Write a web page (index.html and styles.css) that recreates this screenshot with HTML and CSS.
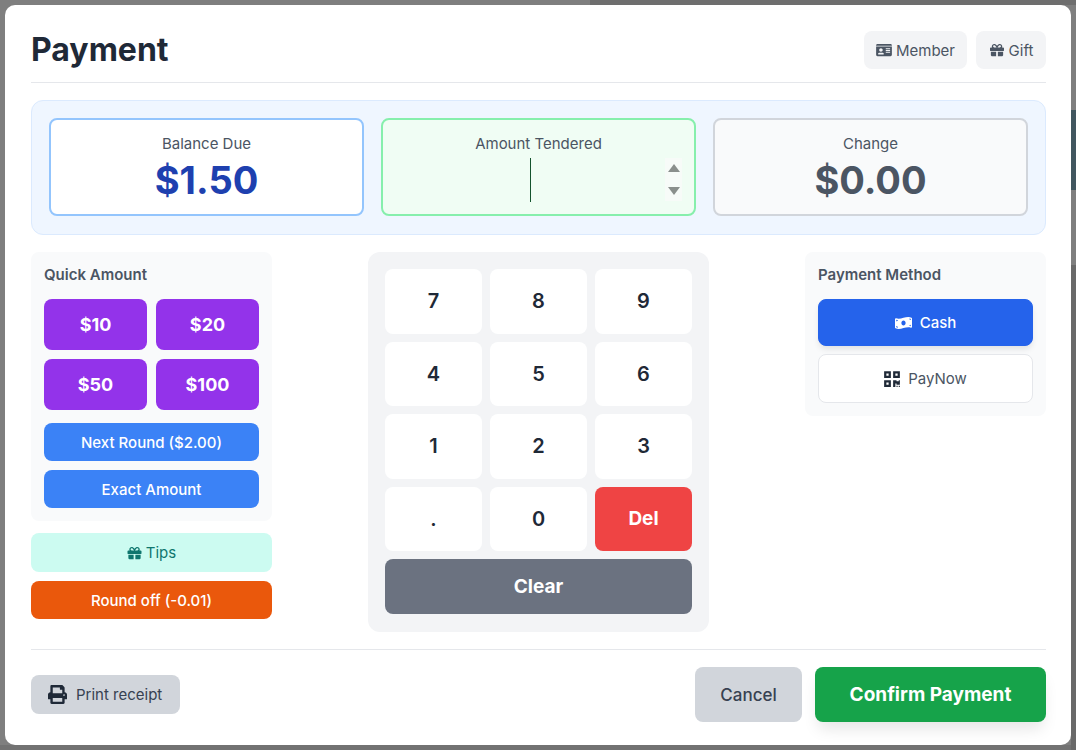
FILE: index.html
```html
<!DOCTYPE html>
<html lang="en">
<head>
    <meta charset="UTF-8">
    <meta name="viewport" content="width=device-width, initial-scale=1.0">
    <title>Payment</title>
    <link rel="stylesheet" href="styles.css">
</head>
<body>
    <div class="behind-top"></div>
    <div class="behind-bottom"></div>
    <div class="behind-teal"></div>
    <div class="behind-right"></div>
    <div class="modal">
        <header class="modal-head">
            <h1>Payment</h1>
            <div class="head-actions">
                <button class="chip">
                    <svg class="icon" viewBox="0 0 576 512"><path d="M528 32H48C21.5 32 0 53.5 0 80v16h576V80c0-26.5-21.5-48-48-48zM0 432c0 26.5 21.5 48 48 48h480c26.5 0 48-21.5 48-48V128H0v304zm352-232c0-4.4 3.6-8 8-8h144c4.4 0 8 3.6 8 8v16c0 4.4-3.6 8-8 8H360c-4.4 0-8-3.6-8-8v-16zm0 64c0-4.4 3.6-8 8-8h144c4.4 0 8 3.6 8 8v16c0 4.4-3.6 8-8 8H360c-4.4 0-8-3.6-8-8v-16zm0 64c0-4.4 3.6-8 8-8h144c4.4 0 8 3.6 8 8v16c0 4.4-3.6 8-8 8H360c-4.4 0-8-3.6-8-8v-16zM176 192c35.3 0 64 28.7 64 64s-28.7 64-64 64-64-28.7-64-64 28.7-64 64-64zM67.1 396.2C75.5 370.5 99.6 352 128 352h8.2c12.3 5.1 25.7 8 39.8 8s27.6-2.9 39.8-8h8.2c28.4 0 52.5 18.5 60.9 44.2 3.2 9.9-5.2 19.8-15.6 19.8H82.7c-10.4 0-18.8-10-15.6-19.8z"/></svg>
                    Member
                </button>
                <button class="chip chip-gift">
                    <svg class="icon" viewBox="0 0 512 512"><path d="M32 448c0 17.7 14.3 32 32 32h160V320H32v128zm256 32h160c17.7 0 32-14.3 32-32V320H288v160zm192-320h-42.1c6.2-12.1 10.1-25.5 10.1-40 0-48.5-39.5-88-88-88-41.6 0-68.5 21.3-103 68.3-34.5-47-61.4-68.3-103-68.3-48.5 0-88 39.5-88 88 0 14.5 3.8 27.9 10.1 40H32c-17.7 0-32 14.3-32 32v80c0 8.8 7.2 16 16 16h480c8.8 0 16-7.2 16-16v-80c0-17.7-14.3-32-32-32zm-326.1 0c-22.1 0-40-17.9-40-40s17.9-40 40-40c19.9 0 34.6 3.3 86.1 80h-86.1zm206.1 0h-86.1c51.4-76.5 65.7-80 86.1-80 22.1 0 40 17.9 40 40s-17.9 40-40 40z"/></svg>
                    Gift
                </button>
            </div>
        </header>

        <section class="summary">
            <div class="sum-card balance">
                <div class="sum-label">Balance Due</div>
                <div class="sum-value">$1.50</div>
            </div>
            <div class="sum-card tendered">
                <div class="sum-label">Amount Tendered</div>
                <div class="sum-value"><span class="caret"></span></div>
                <div class="spinner"><span class="tri-up"></span><span class="tri-down"></span></div>
            </div>
            <div class="sum-card change">
                <div class="sum-label">Change</div>
                <div class="sum-value">$0.00</div>
            </div>
        </section>

        <section class="body-cols">
            <div class="col-side">
                <div class="panel">
                    <div class="panel-title">Quick Amount</div>
                    <div class="quick-grid">
                        <button class="btn-quick">$10</button>
                        <button class="btn-quick">$20</button>
                        <button class="btn-quick">$50</button>
                        <button class="btn-quick">$100</button>
                    </div>
                    <button class="btn-wide btn-next">Next Round ($2.00)</button>
                    <button class="btn-wide">Exact Amount</button>
                </div>
                <button class="btn-tips">
                    <svg class="icon" viewBox="0 0 512 512"><path d="M32 448c0 17.7 14.3 32 32 32h160V320H32v128zm256 32h160c17.7 0 32-14.3 32-32V320H288v160zm192-320h-42.1c6.2-12.1 10.1-25.5 10.1-40 0-48.5-39.5-88-88-88-41.6 0-68.5 21.3-103 68.3-34.5-47-61.4-68.3-103-68.3-48.5 0-88 39.5-88 88 0 14.5 3.8 27.9 10.1 40H32c-17.7 0-32 14.3-32 32v80c0 8.8 7.2 16 16 16h480c8.8 0 16-7.2 16-16v-80c0-17.7-14.3-32-32-32zm-326.1 0c-22.1 0-40-17.9-40-40s17.9-40 40-40c19.9 0 34.6 3.3 86.1 80h-86.1zm206.1 0h-86.1c51.4-76.5 65.7-80 86.1-80 22.1 0 40 17.9 40 40s-17.9 40-40 40z"/></svg>
                    Tips
                </button>
                <button class="btn-round">Round off (-0.01)</button>
            </div>

            <div class="keypad">
                <button class="key">7</button>
                <button class="key">8</button>
                <button class="key">9</button>
                <button class="key">4</button>
                <button class="key">5</button>
                <button class="key">6</button>
                <button class="key">1</button>
                <button class="key">2</button>
                <button class="key">3</button>
                <button class="key">.</button>
                <button class="key">0</button>
                <button class="key key-del">Del</button>
                <button class="key-clear">Clear</button>
            </div>

            <div class="col-side">
                <div class="panel">
                    <div class="panel-title">Payment Method</div>
                    <button class="btn-method active">
                        <svg class="icon icon-cash" viewBox="0 0 640 512"><path d="M621.16 54.46C582.37 38.19 543.55 32 504.75 32c-123.17-.01-246.33 62.34-369.5 62.34-30.89 0-61.76-3.92-92.65-13.72-3.47-1.1-6.95-1.62-10.35-1.62C15.04 79 0 92.32 0 110.81v317.26c0 12.63 7.23 24.6 18.84 29.46C57.63 473.81 96.45 480 135.25 480c123.17 0 246.34-62.35 369.51-62.35 30.89 0 61.76 3.92 92.65 13.72 3.47 1.1 6.95 1.62 10.35 1.62 17.21 0 32.25-13.32 32.25-31.81V83.93c-.01-12.64-7.24-24.6-18.85-29.47zM48 132.22c20.12 5.04 41.12 7.57 62.72 8.93C104.84 170.54 79 192.69 48 192.69v-60.47zm0 285.2v-47.78c34.37 0 62.18 27.27 63.71 61.4-22.53-1.81-43.59-6.31-63.71-13.62zM320 352c-44.19 0-80-42.99-80-96 0-53.02 35.82-96 80-96s80 42.98 80 96c0 53.03-35.83 96-80 96zm272 27.78c-17.52-4.39-35.71-6.85-54.32-8.44 5.87-26.08 27.5-45.88 54.32-49.28v57.72zm0-236.11c-30.89-3.91-54.86-29.7-55.81-61.55 19.54 2.17 38.09 6.23 55.81 12.66v48.89z"/></svg>
                        Cash
                    </button>
                    <button class="btn-method">
                        <svg class="icon icon-qr" viewBox="0 0 448 512"><path d="M0 224h192V32H0v192zM64 96h64v64H64V96zm192-64v192h192V32H256zm128 128h-64V96h64v64zM0 480h192V288H0v192zm64-128h64v64H64v-64zm352-64h32v128h-96v-32h-32v96h-64V288h96v32h64v-32zm0 160h32v32h-32v-32zm-64 0h32v32h-32v-32z"/></svg>
                        PayNow
                    </button>
                </div>
            </div>
        </section>

        <footer class="modal-foot">
            <button class="btn-print">
                <svg class="icon icon-print" viewBox="0 0 512 512"><path d="M448 192V77.25c0-8.49-3.37-16.62-9.37-22.63L393.37 9.37c-6-6-14.14-9.37-22.63-9.37H96C78.33 0 64 14.33 64 32v160c-35.35 0-64 28.65-64 64v112c0 8.84 7.16 16 16 16h48v96c0 17.67 14.33 32 32 32h320c17.67 0 32-14.33 32-32v-96h48c8.84 0 16-7.16 16-16V256c0-35.35-28.65-64-64-64zm-64 256H128v-96h256v96zm0-224H128V64h192v48c0 8.84 7.16 16 16 16h48v96zm48 72c-13.25 0-24-10.75-24-24 0-13.26 10.75-24 24-24s24 10.74 24 24c0 13.25-10.75 24-24 24z"/></svg>
                Print receipt
            </button>
            <div class="foot-actions">
                <button class="btn-cancel">Cancel</button>
                <button class="btn-confirm">Confirm Payment</button>
            </div>
        </footer>
    </div>
</body>
</html>
```

FILE: styles.css
```css
* {
    box-sizing: border-box;
}

html, body {
    height: 100%;
}

body {
    margin: 0;
    padding: 5px;
    background: #7f7f7f;
    font-family: 'Inter', 'Liberation Sans', sans-serif;
    overflow: hidden;
    position: relative;
}

button {
    font-family: inherit;
    border: none;
    cursor: pointer;
    padding: 0;
}

.icon {
    fill: currentColor;
    flex: none;
}

/* page dimmed behind the modal */
.behind-top {
    position: absolute;
    left: 590px;
    right: 0;
    top: 0;
    height: 5px;
    background: #6e6e6e;
}

.behind-bottom {
    position: absolute;
    left: 0;
    right: 0;
    bottom: 0;
    height: 5px;
    background: #727272;
}

.behind-teal {
    position: absolute;
    right: 0;
    top: 110px;
    width: 5px;
    height: 80px;
    background: #41565f;
}

.behind-right {
    position: absolute;
    right: 0;
    top: 265px;
    bottom: 0;
    width: 5px;
    background: #696969;
}

.modal {
    position: relative;
    height: 740px;
    background: #fff;
    border-radius: 10px;
    padding: 0 25px 0 26px;
}

.modal-head {
    height: 78px;
    display: flex;
    align-items: center;
    justify-content: space-between;
    border-bottom: 1px solid #e5e7eb;
    padding-top: 13px;
}

h1 {
    margin: 0;
    font-size: 32px;
    line-height: 38px;
    font-weight: 700;
    color: #1f2937;
}

.head-actions {
    display: flex;
    gap: 9px;
}

.chip {
    height: 38px;
    padding: 0 12px;
    display: flex;
    align-items: center;
    gap: 4px;
    background: #f3f4f6;
    color: #4b5563;
    border-radius: 8px;
    font-size: 15px;
    font-weight: 400;
}

.chip-gift {
    width: 70px;
    justify-content: center;
}

.chip .icon {
    width: 16px;
    height: 14px;
}

.summary {
    margin-top: 17px;
    height: 135px;
    padding: 17px;
    display: grid;
    grid-template-columns: repeat(3, 1fr);
    gap: 17px;
    background: #eff6ff;
    border: 1px solid #dbeafe;
    border-radius: 12px;
}

.sum-card {
    position: relative;
    display: flex;
    flex-direction: column;
    align-items: center;
    padding-top: 14px;
    border: 2px solid;
    border-radius: 8px;
    height: 98px;
}

.balance {
    background: #fff;
    border-color: #93c5fd;
}

.tendered {
    background: #f0fdf4;
    border-color: #86efac;
}

.change {
    background: #f9fafb;
    border-color: #d1d5db;
}

.sum-label {
    font-size: 15px;
    line-height: 20px;
    color: #4b5563;
}

.sum-value {
    margin-top: 4px;
    font-size: 38px;
    line-height: 44px;
    height: 44px;
    font-weight: 700;
}

.balance .sum-value {
    color: #1e40af;
}

.change .sum-value {
    color: #4b5563;
}

.caret {
    display: block;
    width: 1px;
    height: 44px;
    margin-right: 17px;
    background: #14532d;
}

.spinner {
    position: absolute;
    right: 12px;
    top: 38px;
    width: 17px;
    height: 43px;
    background: #f7fbf8;
    display: flex;
    flex-direction: column;
    align-items: center;
    justify-content: space-between;
    padding: 6px 0;
}

.tri-up, .tri-down {
    width: 0;
    height: 0;
    border-left: 6px solid transparent;
    border-right: 6px solid transparent;
}

.tri-up {
    border-bottom: 8px solid #8a8f8c;
}

.tri-down {
    border-top: 8px solid #8a8f8c;
}

.body-cols {
    margin-top: 17px;
    display: flex;
    justify-content: space-between;
    align-items: flex-start;
    height: 398px;
    border-bottom: 1px solid #e5e7eb;
}

.col-side {
    width: 241px;
    display: flex;
    flex-direction: column;
}

.panel {
    background: #f9fafb;
    border-radius: 8px;
    padding: 13px;
}

.panel-title {
    font-size: 15px;
    line-height: 20px;
    font-weight: 600;
    color: #4b5563;
    margin-bottom: 14px;
}

.quick-grid {
    display: grid;
    grid-template-columns: repeat(2, 1fr);
    gap: 9px;
    margin-bottom: 13px;
}

.btn-quick {
    height: 51px;
    background: #9333ea;
    color: #fff;
    border-radius: 8px;
    font-size: 18px;
    font-weight: 700;
}

.btn-wide {
    display: block;
    width: 100%;
    height: 38px;
    background: #3b82f6;
    color: #fff;
    border-radius: 8px;
    font-size: 15px;
    font-weight: 500;
}

.btn-next {
    margin-bottom: 9px;
}

.btn-tips {
    margin-top: 12px;
    height: 39px;
    background: #ccfbf1;
    color: #0f766e;
    border-radius: 8px;
    font-size: 15px;
    font-weight: 400;
    display: flex;
    align-items: center;
    justify-content: center;
    gap: 4px;
}

.btn-tips .icon {
    width: 15px;
    height: 14px;
}

.btn-round {
    margin-top: 9px;
    height: 38px;
    background: #ea580c;
    color: #fff;
    border-radius: 8px;
    font-size: 15px;
    font-weight: 500;
}

.keypad {
    width: 341px;
    height: 380px;
    padding: 17px;
    background: #f3f4f6;
    border-radius: 12px;
    display: grid;
    grid-template-columns: repeat(3, 1fr);
    grid-auto-rows: 64.5px;
    column-gap: 8px;
    row-gap: 8px;
}

.key {
    background: #fff;
    color: #1f2937;
    border-radius: 8px;
    font-size: 20px;
    font-weight: 600;
}

.key-del {
    background: #ef4444;
    color: #fff;
    font-size: 19px;
    font-weight: 700;
}

.key-clear {
    grid-column: 1 / 4;
    height: 55px;
    background: #6b7280;
    color: #fff;
    border-radius: 8px;
    font-size: 19px;
    font-weight: 700;
}

.btn-method {
    width: 100%;
    display: flex;
    align-items: center;
    justify-content: center;
    gap: 8px;
    height: 49px;
    background: #fff;
    color: #4b5563;
    border: 1px solid #e5e7eb;
    border-radius: 8px;
    font-size: 15px;
    font-weight: 400;
}

.btn-method.active {
    height: 47px;
    margin-bottom: 8px;
    background: #2563eb;
    border-color: #2563eb;
    color: #fff;
    font-weight: 500;
    box-shadow: 0 4px 6px -1px rgba(0, 0, 0, 0.1);
}

.icon-cash {
    width: 17px;
    height: 14px;
}

.icon-qr {
    width: 16px;
    height: 18px;
    color: #1f2937;
}

.modal-foot {
    display: flex;
    align-items: center;
    justify-content: space-between;
    padding-top: 17px;
}

.btn-print {
    height: 39px;
    padding: 0 18px 0 17px;
    display: flex;
    align-items: center;
    gap: 9px;
    background: #d1d5db;
    color: #374151;
    border-radius: 8px;
    font-size: 15px;
    font-weight: 400;
}

.icon-print {
    width: 19px;
    height: 19px;
    color: #1f2937;
}

.foot-actions {
    display: flex;
    gap: 13px;
}

.btn-cancel {
    width: 107px;
    height: 55px;
    background: #d1d5db;
    color: #374151;
    border-radius: 8px;
    font-size: 17px;
    font-weight: 500;
}

.btn-confirm {
    width: 231px;
    height: 55px;
    background: #16a34a;
    color: #fff;
    border-radius: 8px;
    font-size: 19px;
    font-weight: 700;
    box-shadow: 0 10px 15px -3px rgba(0, 0, 0, 0.1);
}
```
